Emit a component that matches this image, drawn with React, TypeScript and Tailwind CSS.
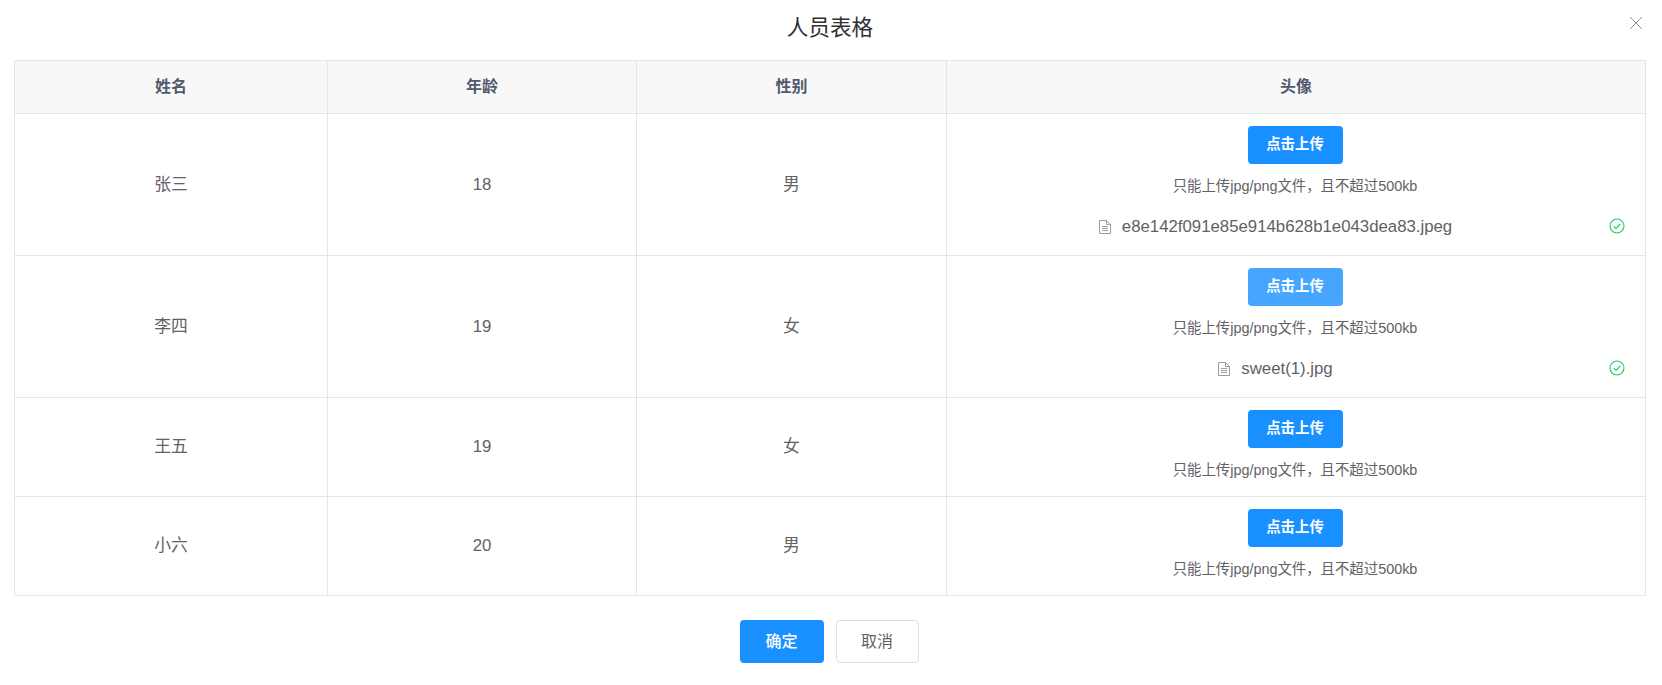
import React from "react";

const font = { fontFamily: '"Liberation Sans","Noto Sans CJK SC",sans-serif' };

function FileIcon() {
  return (
    <svg width="14" height="16" viewBox="0 0 14 16" fill="none" stroke="#9a9da5" strokeWidth="1" className="shrink-0">
      <path d="M1.5 1.5h7l4 4v9h-11z" />
      <path d="M8.5 1.5v4h4" />
      <path d="M4 7.5h6M4 9.5h6M4 11.5h6" />
    </svg>
  );
}

function CheckIcon() {
  return (
    <svg width="16" height="16" viewBox="0 0 16 16" fill="none" stroke="#13ce66" strokeWidth="1.1">
      <circle cx="8" cy="8" r="7" />
      <path d="M4.8 8.2l2.2 2.2 4.2-4.4" />
    </svg>
  );
}

type Row = { name: string; age: string; sex: string; file?: string; light?: boolean };

const rows: Row[] = [
  { name: "张三", age: "18", sex: "男", file: "e8e142f091e85e914b628b1e043dea83.jpeg" },
  { name: "李四", age: "19", sex: "女", file: "sweet(1).jpg", light: true },
  { name: "王五", age: "19", sex: "女" },
  { name: "小六", age: "20", sex: "男" },
];

function Upload({ file, light }: { file?: string; light?: boolean }) {
  return (
    <div className="flex flex-col items-center">
      <button
        className={
          "h-[38px] w-[95px] rounded-[4px] text-[14.4px] font-bold text-white " +
          (light ? "bg-[#46a6ff]" : "bg-[#1890ff]")
        }
      >
        点击上传
      </button>
      <div className="mt-[13px] h-[18px] text-[14.4px] leading-[18px] text-[#606266]">只能上传jpg/png文件，且不超过500kb</div>
      {file && (
        <div className="relative mt-[21px] flex h-[22px] w-full items-center justify-center gap-[10px] pr-[40px] text-[16.8px] text-[#606266]">
          <FileIcon />
          <span>{file}</span>
          <span className="absolute right-[7px] top-[2px] flex">
            <CheckIcon />
          </span>
        </div>
      )}
    </div>
  );
}

export default function App() {
  return (
    <div style={font} className="h-[685px] w-[1662px] overflow-hidden bg-white pr-[2px]">
      <div className="relative flex h-[60px] items-start justify-center pt-[13px] text-[21.6px] leading-[30px] text-[#303133]">
        人员表格
        <svg width="14" height="14" viewBox="0 0 14 14" className="absolute right-[17px] top-[16px]" stroke="#909399" strokeWidth="1" fill="none">
          <path d="M1 1l12 12M13 1L1 13" />
        </svg>
      </div>
      <div className="px-[14px]">
        <table className="w-[1632px] table-fixed border-collapse border border-[#dfe6ec] text-[16.8px] text-[#606266]">
          <colgroup>
            <col className="w-[313px]" />
            <col className="w-[309px]" />
            <col className="w-[310px]" />
            <col />
          </colgroup>
          <thead>
            <tr className="h-[53px] bg-[#f8f8f9] text-[#515a6e]">
              {["姓名", "年龄", "性别", "头像"].map((h) => (
                <th key={h} className="border border-[#dfe6ec] text-center text-[16px] font-bold">
                  {h}
                </th>
              ))}
            </tr>
          </thead>
          <tbody>
            {rows.map((r) => (
              <tr key={r.name}>
                <td className="border border-[#dfe6ec] text-center">{r.name}</td>
                <td className="border border-[#dfe6ec] text-center">{r.age}</td>
                <td className="border border-[#dfe6ec] text-center">{r.sex}</td>
                <td className="border border-[#dfe6ec] pb-[17px] pl-[11px] pr-[13px] pt-[12px] text-center">
                  <Upload file={r.file} light={r.light} />
                </td>
              </tr>
            ))}
          </tbody>
        </table>
      </div>
      <div className="mt-[24px] flex justify-center gap-[12px] pr-[2px] text-[16px]">
        <button className="h-[43px] w-[84px] rounded-[4px] bg-[#1890ff] font-medium text-white">确定</button>
        <button className="h-[43px] w-[83px] rounded-[4px] border border-[#dcdfe6] bg-white text-[#606266]">取消</button>
      </div>
    </div>
  );
}
